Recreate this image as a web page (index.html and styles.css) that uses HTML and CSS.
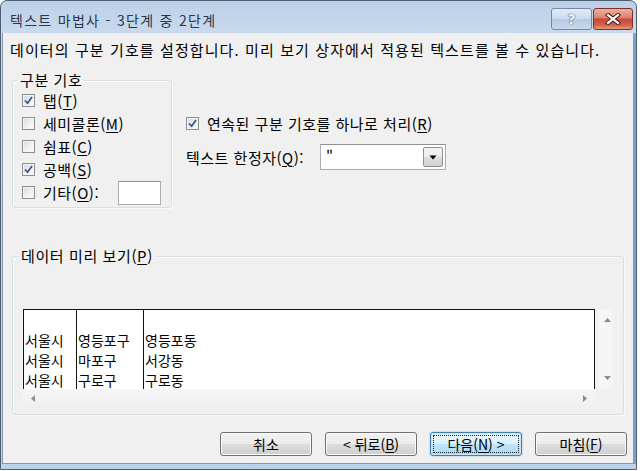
FILE: index.html
```html
<!DOCTYPE html>
<html lang="ko">
<head>
<meta charset="utf-8">
<title>텍스트 마법사 - 3단계 중 2단계</title>
<link rel="stylesheet" href="styles.css">
</head>
<body>
<div class="window">
  <div class="titlebar">
    <span class="title">텍스트 마법사 - 3단계 중 2단계</span>
    <div class="caption">
      <span class="cbtn help">?</span>
      <span class="cbtn close">
        <svg width="16" height="12" viewBox="0 0 16 12"><path d="M3 2 L13 10 M13 2 L3 10" stroke="#5a1d16" stroke-width="4.2" stroke-linecap="square" fill="none"/><path d="M3 2 L13 10 M13 2 L3 10" stroke="#ffffff" stroke-width="2.2" stroke-linecap="square" fill="none"/></svg>
      </span>
    </div>
  </div>
  <div class="client">
    <p class="intro">데이터의 구분 기호를 설정합니다. 미리 보기 상자에서 적용된 텍스트를 볼 수 있습니다.</p>
    <div class="top">
      <fieldset class="group delim">
        <legend>구분 기호</legend>
        <label class="chk"><span class="box on"><svg width="9" height="9" viewBox="0 0 9 9"><path d="M1 4.5 L3.6 7.2 L8 1" stroke="#3b5689" stroke-width="1.8" fill="none"/></svg></span><span class="lbl">탭(<u>T</u>)</span></label>
        <label class="chk"><span class="box"></span><span class="lbl">세미콜론(<u>M</u>)</span></label>
        <label class="chk"><span class="box"></span><span class="lbl">쉼표(<u>C</u>)</span></label>
        <label class="chk"><span class="box on"><svg width="9" height="9" viewBox="0 0 9 9"><path d="M1 4.5 L3.6 7.2 L8 1" stroke="#3b5689" stroke-width="1.8" fill="none"/></svg></span><span class="lbl">공백(<u>S</u>)</span></label>
        <label class="chk"><span class="box"></span><span class="lbl">기타(<u>O</u>):</span><span class="textbox"></span></label>
      </fieldset>
      <div class="options">
        <label class="chk"><span class="box on"><svg width="9" height="9" viewBox="0 0 9 9"><path d="M1 4.5 L3.6 7.2 L8 1" stroke="#3b5689" stroke-width="1.8" fill="none"/></svg></span><span class="lbl">연속된 구분 기호를 하나로 처리(<u>R</u>)</span></label>
        <div class="qualifier">
          <span class="qlabel">텍스트 한정자(<u>Q</u>):</span>
          <div class="combo">
            <span class="val">"</span>
            <span class="drop"><svg width="8" height="5" viewBox="0 0 8 5"><path d="M0.5 0.5 H7.5 L4 4.5 Z" fill="#000"/></svg></span>
          </div>
        </div>
      </div>
    </div>
    <fieldset class="group preview">
      <legend>데이터 미리 보기(<u>P</u>)</legend>
      <div class="pv">
        <div class="sheet">
          <div class="col c1">
            <div class="head"></div>
            <div class="cell">서울시</div>
            <div class="cell">서울시</div>
            <div class="cell">서울시</div>
          </div>
          <div class="col c2">
            <div class="head"></div>
            <div class="cell">영등포구</div>
            <div class="cell">마포구</div>
            <div class="cell">구로구</div>
          </div>
          <div class="col c3">
            <div class="head"></div>
            <div class="cell">영등포동</div>
            <div class="cell">서강동</div>
            <div class="cell">구로동</div>
          </div>
        </div>
        <div class="vscroll">
          <svg width="7" height="4" viewBox="0 0 7 4"><path d="M0 4 L3.5 0 L7 4 Z" fill="#8c8c8c"/></svg>
          <svg width="7" height="4" viewBox="0 0 7 4"><path d="M0 0 L3.5 4 L7 0 Z" fill="#8c8c8c"/></svg>
        </div>
        <div class="hscroll">
          <svg width="4" height="7" viewBox="0 0 4 7"><path d="M4 0 L0 3.5 L4 7 Z" fill="#8c8c8c"/></svg>
          <svg width="4" height="7" viewBox="0 0 4 7"><path d="M0 0 L4 3.5 L0 7 Z" fill="#8c8c8c"/></svg>
        </div>
        <div class="corner"></div>
      </div>
    </fieldset>
    <div class="buttons">
      <span class="btn">취소</span>
      <span class="btn">&lt; 뒤로(<u>B</u>)</span>
      <span class="btn default"><span class="focus">다음(<u>N</u>) &gt;</span></span>
      <span class="btn">마침(<u>F</u>)</span>
    </div>
  </div>
</div>
</body>
</html>
```

FILE: styles.css
```css
* { box-sizing: border-box; }
html, body { margin: 0; padding: 0; background: #ffffff; }
body {
  font-family: "Noto Sans CJK KR", "Noto Sans", sans-serif;
  font-size: 15px;
  color: #000;
}
u { text-decoration: underline; text-underline-offset: 2px; text-decoration-thickness: 1px; }

.window {
  width: 637px;
  height: 470px;
  border: 1px solid #4e5e71;
  border-radius: 7px 7px 0 0;
  background: linear-gradient(to bottom, #bcd0e8 0, #c9daee 32px, #c3d6ec 60%, #bcd2ea 100%);
  display: flex;
  flex-direction: column;
  overflow: hidden;
}

.titlebar {
  flex: none;
  height: 32px;
  display: flex;
  justify-content: space-between;
  align-items: flex-start;
  padding: 0 3px 0 9px;
}
.title {
  margin-top: 10px;
  font-size: 14px;
  line-height: 18px;
  letter-spacing: 1.3px;
  color: #2a3848;
}
.caption { display: flex; gap: 1px; margin-top: 7px; }
.cbtn {
  height: 22px;
  border-radius: 3px;
  display: flex;
  align-items: center;
  justify-content: center;
}
.help {
  width: 41px;
  border: 1px solid #7189a8;
  background: linear-gradient(to bottom, #e2ebf6 0, #cbdaed 48%, #b5c9e3 52%, #c9daee 100%);
  color: #f2f6fb;
  font-family: "DejaVu Sans", sans-serif;
  font-weight: bold;
  font-size: 14px;
  text-shadow: 0 0 1px #2f4a72, 0 0 1px #2f4a72;
}
.close {
  width: 40px;
  border: 1px solid #7d3026;
  background: linear-gradient(to bottom, #eab0a2 0, #dc8570 42%, #c84c36 52%, #d0614a 80%, #e69a7c 100%);
}

.client {
  flex: 1;
  margin: 0 2px 5px 1px;
  background: #f0f0f0;
  border: 1px solid #8698ac;
  border-top: none;
  box-shadow: 2px 0 0 #7aa3d2;
}

.intro {
  margin: 8px 0 0 7px;
  line-height: 18px;
  letter-spacing: 1.1px;
}

.top {
  display: flex;
  align-items: flex-start;
  margin: 12px 0 0 9px;
}

.group {
  margin: 0;
  border: 1px solid #d5dfe5;
  border-radius: 3px;
  box-shadow: inset 1px 1px 0 #fafafa, 1px 1px 0 #fafafa;
}
.group legend {
  padding: 0 2px;
  margin-left: -4px;
  line-height: 18px;
  letter-spacing: 0.6px;
}

.delim {
  width: 160px;
  padding: 0 10px 3px 9px;
}

.chk {
  display: flex;
  align-items: center;
  height: 23px;
  gap: 8px;
  white-space: nowrap;
}
.lbl { letter-spacing: 0.5px; }
.box {
  flex: none;
  width: 13px;
  height: 13px;
  border: 1px solid #8f8f8f;
  background: linear-gradient(135deg, #d8d8d8 0, #f2f2f2 60%, #ffffff 100%);
  box-shadow: inset 0 0 0 1px #f4f4f4;
  display: flex;
  align-items: center;
  justify-content: center;
}
.box.on { background: linear-gradient(135deg, #cfd6e2 0, #eef1f6 60%, #fafbfd 100%); }

.textbox {
  margin-left: auto;
  width: 43px;
  height: 24px;
  background: #fff;
  border: 1px solid #abadb3;
  border-top-color: #8e9198;
}

.options {
  margin-left: 14px;
  padding-top: 41px;
}
.qualifier {
  display: flex;
  align-items: center;
  margin-top: 9px;
}
.qlabel { width: 134px; white-space: nowrap; letter-spacing: 0.5px; }
.combo {
  width: 126px;
  height: 26px;
  background: #fff;
  border: 1px solid #abadb3;
  border-top-color: #8e9198;
  display: flex;
  align-items: center;
  justify-content: space-between;
  padding: 0 2px 0 5px;
}
.val { line-height: 20px; }
.drop {
  width: 20px;
  height: 20px;
  border: 1px solid #8e8f8f;
  border-radius: 2px;
  background: linear-gradient(to bottom, #f4f4f4 0, #ececec 50%, #dedede 50%, #d2d2d2 100%);
  display: flex;
  align-items: center;
  justify-content: center;
}

.preview {
  width: 612px;
  margin: 39px 0 0 9px;
  padding: 44px 5px 7px 10px;
}

.pv {
  display: grid;
  grid-template-columns: 572px 22px;
  grid-template-rows: 80px 18px;
}
.sheet {
  display: flex;
  background: #fff;
  border: 1px solid #111;
  border-bottom: none;
  overflow: hidden;
  font-size: 14px;
  line-height: 20px;
}
.col { border-right: 1px solid #111; padding-left: 1px; white-space: nowrap; }
.c1 { width: 53px; }
.c2 { width: 67px; }
.c3 { flex: 1; border-right: none; }
.head { height: 20px; }
.cell { height: 20px; }

.vscroll {
  background: linear-gradient(to right, #f0f0f0, #f6f6f6 30%, #f6f6f6 70%, #eeeeee);
  display: flex;
  flex-direction: column;
  align-items: center;
  justify-content: space-between;
  padding: 9px 0 9px 2px;
}
.hscroll {
  background: linear-gradient(to bottom, #f6f6f6, #efefef);
  display: flex;
  align-items: center;
  justify-content: space-between;
  padding: 0 8px 0 8px;
}
.corner { background: #f0f0f0; }

.buttons {
  display: flex;
  justify-content: flex-end;
  gap: 13px;
  margin: 17px 6px 0 0;
}
.btn {
  width: 92px;
  height: 24px;
  border: 1px solid #707070;
  border-radius: 3px;
  background: linear-gradient(to bottom, #f2f2f2 0, #ebebeb 50%, #dddddd 50%, #cfcfcf 100%);
  box-shadow: inset 0 0 0 1px #fbfbfb;
  display: flex;
  align-items: center;
  justify-content: center;
  font-size: 14px;
  line-height: 18px;
  white-space: nowrap;
}
.btn.default {
  border-color: #3c7fb1;
  background: linear-gradient(to bottom, #eaf6fd 0, #d9f0fc 50%, #bee6fd 50%, #a7d9f5 100%);
  box-shadow: inset 0 0 0 1px #c5e7f9, 0 0 2px #7fbde6;
  padding: 2px;
}
.focus {
  flex: 1;
  height: 100%;
  border: 1px dotted #222;
  display: flex;
  align-items: center;
  justify-content: center;
}
```
